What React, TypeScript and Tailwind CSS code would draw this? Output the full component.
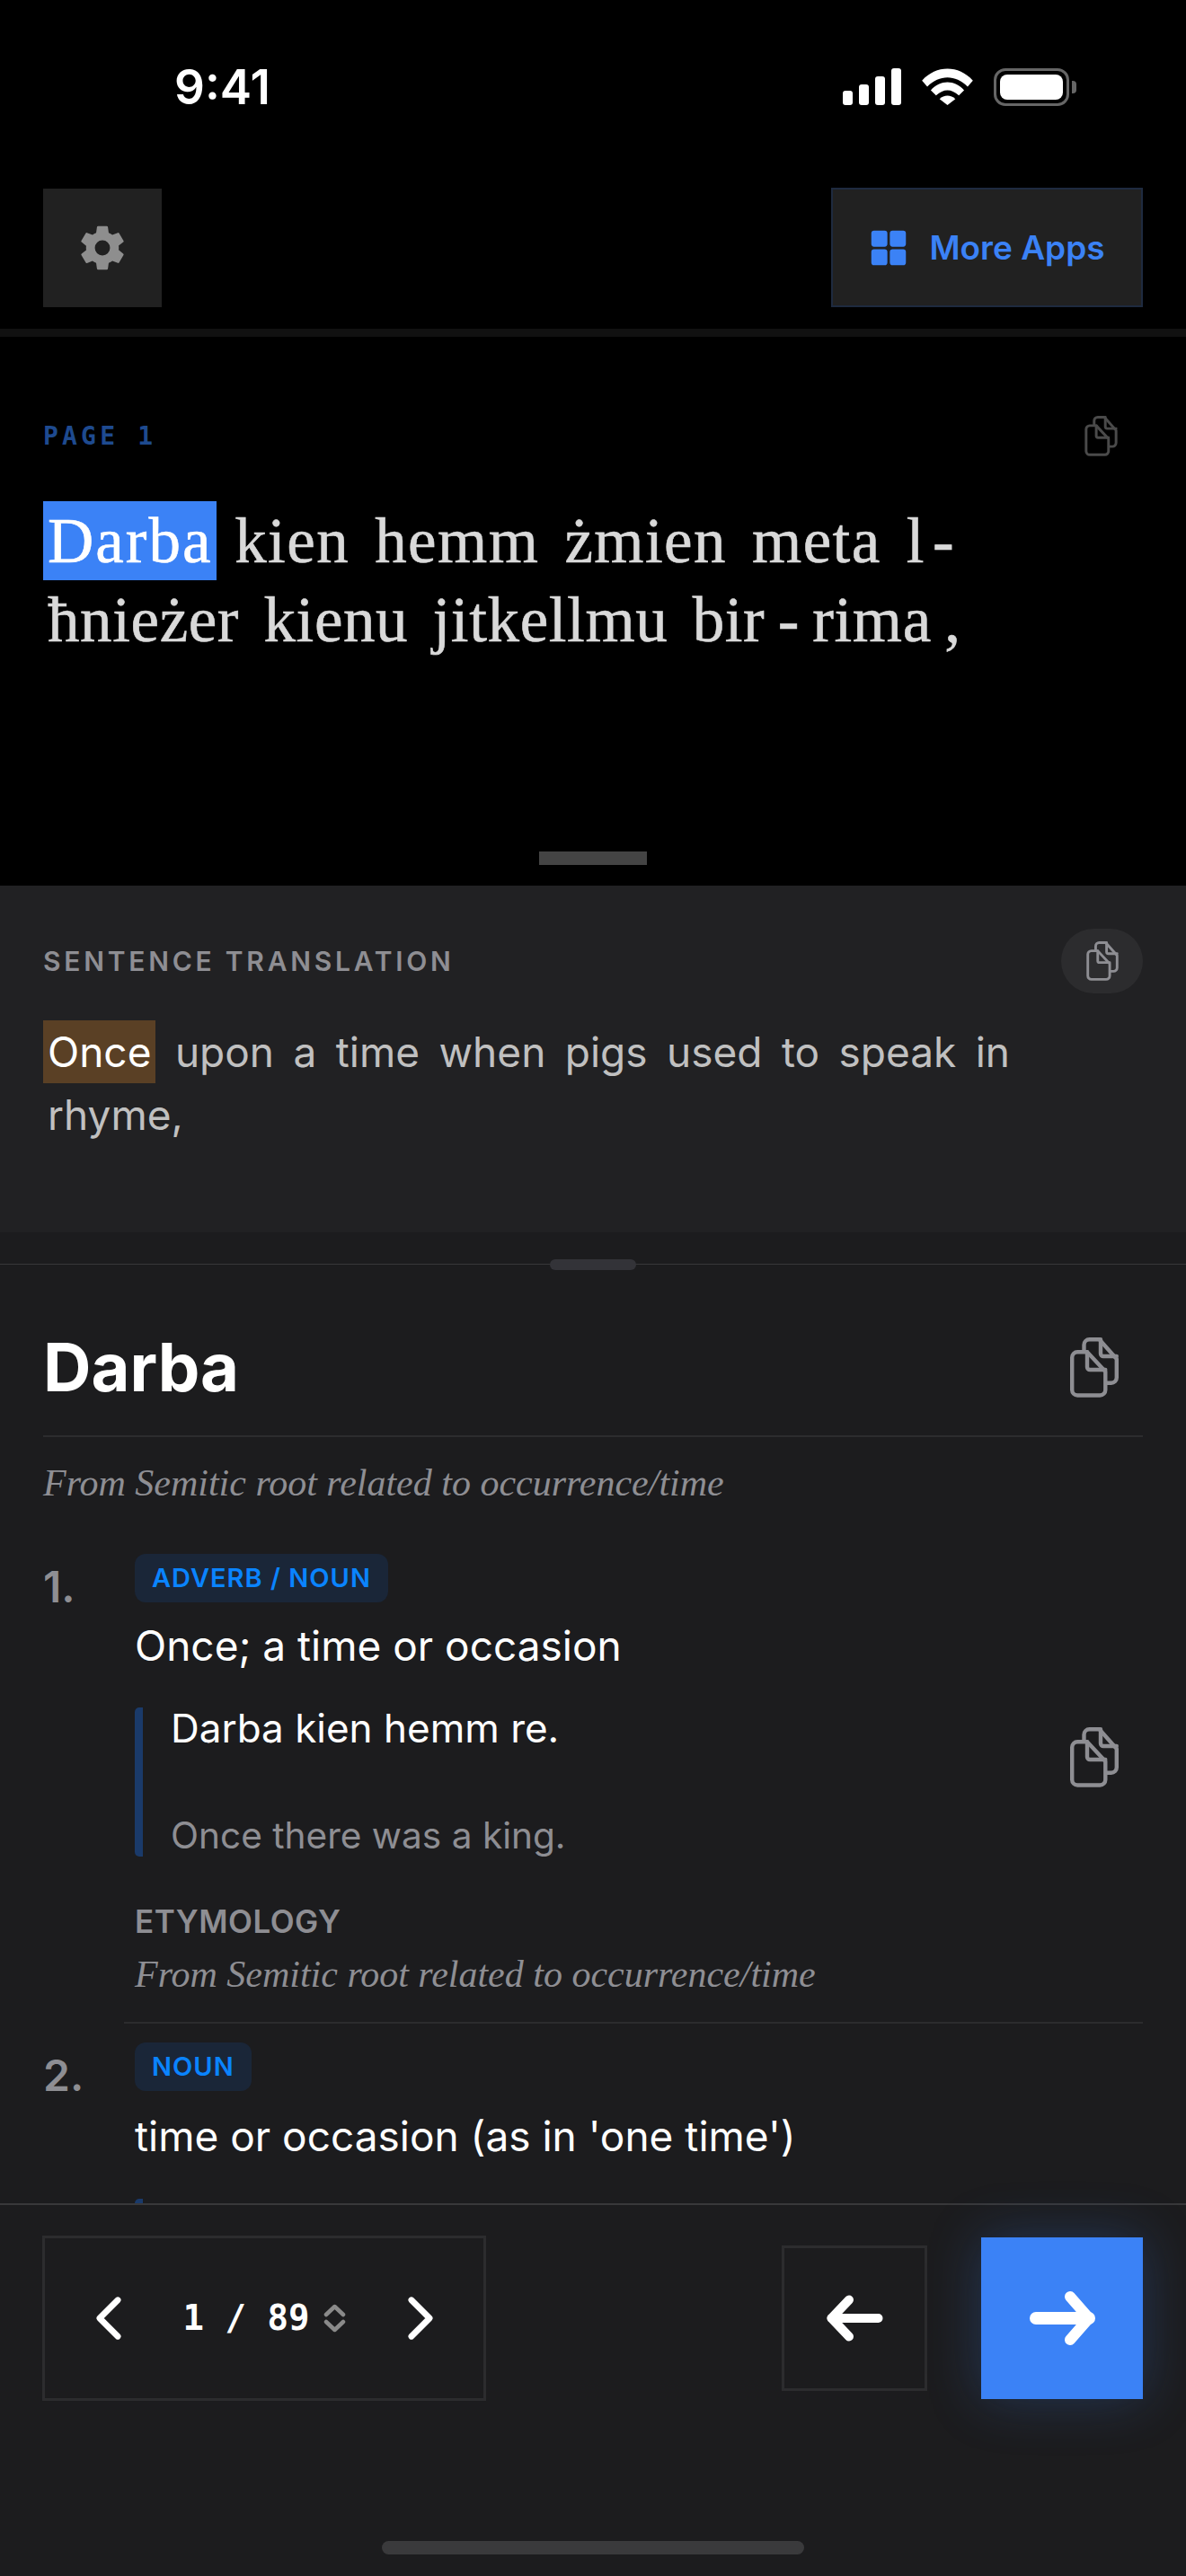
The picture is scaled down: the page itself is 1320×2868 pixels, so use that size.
import React from "react";
import { IoChevronBack, IoChevronForward, IoGrid, IoSettingsSharp } from "react-icons/io5";

const INTER = "font-['Inter',sans-serif]";
const SERIF = "font-['Liberation_Serif',serif]";

function SignalIcon() {
  return (
    <svg width="65" height="41" viewBox="0 0 65 41" fill="white">
      <rect x="0" y="25" width="11" height="16" rx="3" />
      <rect x="18" y="18" width="11" height="23" rx="3" />
      <rect x="36" y="9" width="11" height="32" rx="3" />
      <rect x="54" y="0" width="11" height="41" rx="3" />
    </svg>
  );
}

function WifiIcon() {
  return (
    <svg width="57" height="41" viewBox="0 0 58 42" fill="white">
      <path d="M0 14 C16 -4 42 -4 58 14 L52 21 C38 7 20 7 6 21 Z" />
      <path d="M10 25 C21 13 37 13 48 25 L42 31 C33 23 25 23 16 31 Z" />
      <path d="M20 35 C25 30 33 30 38 35 L29 42 Z" />
    </svg>
  );
}

function BatteryIcon() {
  return (
    <div className="flex items-center">
      <div className="w-[84px] h-[42px] rounded-[13px] border-[3px] border-[#666] p-[4px]">
        <div className="w-full h-full rounded-[8px] bg-white" />
      </div>
      <div className="w-[5px] h-[14px] ml-[3px] rounded-r-[4px] bg-[#666]" />
    </div>
  );
}

function ExpandIcon() {
  return (
    <svg width="25" height="32" viewBox="0 0 25 32" fill="none" stroke="#8a8a8a" strokeWidth="4.5" strokeLinecap="round" strokeLinejoin="round">
      <path d="M3 12 L12.5 3 L22 12" />
      <path d="M3 20 L12.5 29 L22 20" />
    </svg>
  );
}

// two overlapping sheets with folded corners
function CopyIcon({ width = 54, height = 67, className = "" }: { width?: number; height?: number; className?: string }) {
  return (
    <svg width={width} height={height} viewBox="0 0 54 67" fill="none" stroke="currentColor" strokeWidth="4.4" strokeLinejoin="round" strokeLinecap="round" className={className}>
      <path d="M8.2 16.2 H19 L39.3 38 V58.5 a6 6 0 0 1 -6 6 H8.2 a6 6 0 0 1 -6 -6 V22.2 a6 6 0 0 1 6 -6 Z" />
      <path d="M19 16.2 V33 a3 3 0 0 0 3 3 H39.3" />
      <path d="M15.5 14 V8.2 a6 6 0 0 1 6 -6 H32.5 L51.8 24 V44.8 a6 6 0 0 1 -6 6 H41" />
      <path d="M34 2.2 V18 a3 3 0 0 0 3 3 H51.8" />
    </svg>
  );
}

function StatusBar() {
  return (
    <div className="h-[210px] shrink-0 flex items-start justify-between pt-[76px] pl-[194px] pr-[122px]">
      <span className={`${INTER} text-[53px] leading-[42px] font-semibold text-white`}>9:41</span>
      <div className="flex items-start gap-[23px]">
        <SignalIcon />
        <WifiIcon />
        <BatteryIcon />
      </div>
    </div>
  );
}

function Header() {
  return (
    <div className="h-[165px] shrink-0 border-b-[9px] border-[#111111] flex items-start justify-between px-[48px]">
      <button className="w-[132px] h-[132px] bg-[#212121] flex items-center justify-center text-[#8e8e8e]">
        <IoSettingsSharp size={54} />
      </button>
      <button className="w-[347px] h-[133px] -mt-[1px] bg-[#212121] border-[2px] border-[#1e2a3f] flex items-center justify-center gap-[23px] text-[#3b82f6]">
        <IoGrid size={44} />
        <span className={`${INTER} text-[37px] font-semibold`}>More Apps</span>
      </button>
    </div>
  );
}

function ReaderPanel() {
  return (
    <div className="h-[611px] shrink-0 relative px-[48px] pt-[88px]">
      <div className="flex items-center justify-between pr-[28px]">
        <span className="font-['DejaVu_Sans_Mono',monospace] text-[28px] leading-[32px] font-bold tracking-[4.2px] text-[#1e4a8f] whitespace-pre">
          PAGE 1
        </span>
        <CopyIcon width={37} height={45} className="text-[#4a4a4a]" />
      </div>
      <p className={`${SERIF} mt-[50px] text-[71px] leading-[88px] text-[#d9d9d9] [word-spacing:9px] [-webkit-text-stroke:0.6px]`}>
        <span className="inline-block bg-[#3b82f6] text-white px-[5px] tracking-[2px] mr-[-7px]">Darba</span>{" "}
        <span className="tracking-[1.4px]">kien hemm żmien meta l</span>
        <span className="ml-[8px]">-</span>
        <br />
        <span className="pl-[5px] tracking-[0.6px]">
          ħnieżer kienu jitkellmu <span className="[word-spacing:-4px]">bir - rima ,</span>
        </span>
      </p>
      <div className="absolute left-[600px] bottom-[23px] w-[120px] h-[15px] bg-[#444444]" />
    </div>
  );
}

function TranslationPanel() {
  return (
    <div className="h-[386px] shrink-0 bg-[#212123] px-[48px] pt-[48px]">
      <div className="flex items-center justify-between">
        <span className={`${INTER} text-[30px] font-semibold tracking-[3.75px] text-[#8e8e93]`}>
          SENTENCE TRANSLATION
        </span>
        <div className="w-[91px] h-[72px] rounded-full bg-[#2c2c2e] flex items-center justify-center text-[#8e8e93]">
          <CopyIcon width={36} height={44} />
        </div>
      </div>
      <p className={`${INTER} mt-[30px] text-[46px] leading-[70px] text-[#c0c0c0] [word-spacing:8.5px]`}>
        <span className="inline-block bg-[#5a4025] text-white px-[5px]">Once</span> upon a time when pigs used to speak in
        <br />
        <span className="pl-[5px]">rhyme,</span>
      </p>
    </div>
  );
}

function Badge({ children }: { children: React.ReactNode }) {
  return (
    <span className={`${INTER} inline-flex h-[54px] items-center rounded-[12px] bg-[#1a2638] px-[19px] text-[29px] font-semibold tracking-[1px] text-[#0a84ff]`}>
      {children}
    </span>
  );
}

function DictionaryPanel() {
  return (
    <div className="flex-1 min-h-0 overflow-hidden relative bg-[#1c1c1e]">
      {/* drag handle */}
      <div className="h-[36px] relative">
        <div className="absolute inset-x-0 top-[35px] h-[1px] bg-[#38383a]" />
        <div className="absolute left-[612px] top-[30px] w-[96px] h-[12px] rounded-full bg-[#333338]" />
      </div>
      <div className="px-[48px]">
        <div className="h-[192px] border-b-[2px] border-[#2c2c2e] flex items-start justify-between pt-[70px]">
          <h1 className={`${INTER} text-[74px] leading-[88px] font-bold text-white`}>Darba</h1>
          <CopyIcon className="text-[#8e8e93] mr-[27px] mt-[11px]" />
        </div>
        <p className={`${SERIF} mt-[24px] text-[42px] leading-[54px] italic text-[#8e8e93]`}>
          From Semitic root related to occurrence/time
        </p>

        <div className="mt-[52px] flex">
          <span className={`${INTER} w-[102px] shrink-0 pt-[7px] text-[48px] leading-[60px] font-semibold text-[#8e8e93]`}>1.</span>
          <div className="flex-1">
            <Badge>ADVERB / NOUN</Badge>
            <p className={`${INTER} mt-[18px] text-[46px] leading-[60px] text-white`}>Once; a time or occasion</p>
            <div className="mt-[39px] flex items-start justify-between">
              <div className="flex-1 h-[166px] border-l-[9px] border-[#1a3a6a] rounded-l-[5px] pl-[31px] flex flex-col justify-between">
                <p className={`${INTER} text-[44px] leading-[46px] text-white`}>Darba kien hemm re.</p>
                <p className={`${INTER} text-[40.6px] leading-[46px] text-[#8e8e93]`}>Once there was a king.</p>
              </div>
              <CopyIcon className="text-[#8e8e93] mr-[27px] mt-[22px]" />
            </div>
            <p className={`${INTER} mt-[50px] text-[35px] leading-[44px] font-semibold tracking-[0.5px] text-[#8e8e93]`}>ETYMOLOGY</p>
            <p className={`${SERIF} mt-[10px] text-[42px] leading-[54px] italic text-[#8e8e93]`}>
              From Semitic root related to occurrence/time
            </p>
          </div>
        </div>

        <div className="ml-[90px] mt-[26px] h-[2px] bg-[#2c2c2e]" />

        <div className="mt-[21px] flex">
          <span className={`${INTER} w-[102px] shrink-0 pt-[7px] text-[48px] leading-[60px] font-semibold text-[#8e8e93]`}>2.</span>
          <div className="flex-1">
            <Badge>NOUN</Badge>
            <p className={`${INTER} mt-[20px] text-[46px] leading-[60px] text-white`}>time or occasion (as in 'one time')</p>
            <div className="mt-[40px] h-[166px] border-l-[9px] border-[#1a3a6a] rounded-l-[5px] pl-[31px]">
              <p className={`${INTER} text-[44px] leading-[46px] text-white`}>Għal darba waħda biss.</p>
            </div>
          </div>
        </div>
      </div>
    </div>
  );
}

function Footer() {
  return (
    <div className="h-[415px] shrink-0 relative border-t-[2px] border-[#38383a] bg-[#1c1c1e] px-[48px] pt-[34px]">
      <div className="flex items-center justify-between">
        <div className="w-[494px] h-[184px] -ml-[1px] border-[3px] border-[#2c2c2e] flex items-center justify-between pl-[35px] pr-[34px] text-white">
          <IoChevronBack size={72} />
          <div className="flex items-center font-['DejaVu_Sans_Mono',monospace] text-[39px] font-bold whitespace-pre">
            <span>1 / 89</span>
            <span className="ml-[16px]">
              <ExpandIcon />
            </span>
          </div>
          <IoChevronForward size={72} />
        </div>
        <div className="flex items-center gap-[60px]">
          <button className="w-[162px] h-[162px] border-[3px] border-[#2c2c2e] flex items-center justify-center text-white">
            <svg width="63" height="52" viewBox="0 0 63 52" fill="none" stroke="currentColor" strokeWidth="10" strokeLinecap="round" strokeLinejoin="round">
              <path d="M5.5 26 H57.5" />
              <path d="M25 5.5 L5.5 26 L25 46.5" />
            </svg>
          </button>
          <button className="w-[180px] h-[180px] bg-[#3b82f6] shadow-[0_0_60px_rgba(59,130,246,0.25)] flex items-center justify-center text-white">
            <svg width="73" height="60" viewBox="0 0 73 60" fill="none" stroke="currentColor" strokeWidth="12" strokeLinecap="round" strokeLinejoin="round">
              <path d="M7 30 H66" strokeWidth="14" />
              <path d="M45 6 L66 30 L45 54" />
            </svg>
          </button>
        </div>
      </div>
      <div className="absolute left-[425px] bottom-[24px] w-[470px] h-[15px] rounded-full bg-[#3a3a3c]" />
    </div>
  );
}

export default function App() {
  return (
    <div className="w-[1320px] h-[2868px] overflow-hidden flex flex-col bg-black">
      <StatusBar />
      <Header />
      <ReaderPanel />
      <TranslationPanel />
      <DictionaryPanel />
      <Footer />
    </div>
  );
}
